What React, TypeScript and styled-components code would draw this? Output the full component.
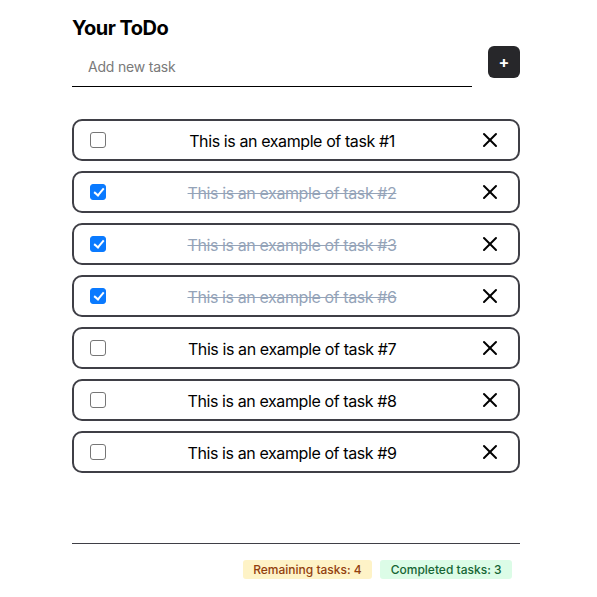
import React, { useState } from "react";
import styled, { createGlobalStyle } from "styled-components";
import { X } from "lucide-react";

const Global = createGlobalStyle`
  html, body { margin: 0; padding: 0; background: #ffffff; }
  body { font-family: Inter, "Noto Sans", Arial, sans-serif; color: #000; }
  * { box-sizing: border-box; }
`;

const Page = styled.div`
  width: 597px;
  height: 597px;
  padding: 14px 0 0 72px;
`;

const Container = styled.div`
  width: 448px;
  display: flex;
  flex-direction: column;
`;

const Title = styled.h1`
  margin: 0;
  font-size: 20px;
  line-height: 28px;
  font-weight: 700;
  letter-spacing: -0.5px;
`;

const Form = styled.div`
  display: flex;
  align-items: center;
  gap: 16px;
  margin-top: 5px;
`;

const Input = styled.input`
  width: 400px;
  height: 40px;
  border: none;
  border-bottom: 1px solid #000;
  padding: 0 16px;
  font-family: inherit;
  font-size: 14px;
  letter-spacing: -0.2px;
  outline: none;
  background: transparent;
  &::placeholder { color: #7a7a7a; }
`;

const AddButton = styled.button`
  width: 32px;
  height: 32px;
  border: none;
  border-radius: 6px;
  background: #27272a;
  color: #fff;
  display: flex;
  align-items: center;
  justify-content: center;
  padding: 0;
  margin-top: -10px;
  font-family: inherit;
  font-size: 16px;
  font-weight: 700;
  cursor: pointer;
`;

const List = styled.ul`
  list-style: none;
  margin: 32px 0 0;
  padding: 0;
  display: flex;
  flex-direction: column;
  gap: 10px;
`;

const Row = styled.li`
  height: 42px;
  border: 2px solid #3f3f46;
  border-radius: 10px;
  display: flex;
  align-items: center;
  padding: 0 16px;
  gap: 8px;
`;

const Check = styled.input`
  appearance: none;
  -webkit-appearance: none;
  width: 16px;
  height: 16px;
  margin: 0;
  border: 1px solid #767676;
  border-radius: 3px;
  background: #fff;
  flex: none;
  position: relative;
  &:checked {
    background: #0a7aff;
    border-color: #0a7aff;
  }
  &:checked::after {
    content: "";
    position: absolute;
    left: 4.5px;
    top: 1px;
    width: 4px;
    height: 8px;
    border: solid #fff;
    border-width: 0 2.5px 2.5px 0;
    transform: rotate(40deg);
  }
`;

const TaskText = styled.span<{ $done: boolean }>`
  flex: 1;
  text-align: center;
  font-size: 16px;
  line-height: 20px;
  padding-top: 2px;
  letter-spacing: -0.4px;
  color: ${(p) => (p.$done ? "#94a3b8" : "#000")};
  text-decoration: ${(p) => (p.$done ? "line-through" : "none")};
`;

const DeleteButton = styled.button`
  width: 24px;
  height: 24px;
  padding: 0;
  border: none;
  background: none;
  color: #000;
  display: flex;
  align-items: center;
  justify-content: center;
  flex: none;
  cursor: pointer;
`;

const Footer = styled.div`
  margin-top: 70px;
  border-top: 1px solid #3f3f46;
  padding: 16px 8px 0 0;
  display: flex;
  justify-content: flex-end;
  gap: 8px;
`;

const Badge = styled.span<{ $tone: "amber" | "green" }>`
  font-size: 12px;
  line-height: 19px;
  padding: 0 10.5px;
  border-radius: 3px;
  font-weight: 500;
  background: ${(p) => (p.$tone === "amber" ? "#fef3c7" : "#dcfce7")};
  color: ${(p) => (p.$tone === "amber" ? "#92400e" : "#166534")};
`;

const initial = [
  { id: 1, done: false },
  { id: 2, done: true },
  { id: 3, done: true },
  { id: 6, done: true },
  { id: 7, done: false },
  { id: 8, done: false },
  { id: 9, done: false },
];

export default function App() {
  const [tasks, setTasks] = useState(initial);
  const remaining = tasks.filter((t) => !t.done).length;
  const completed = tasks.length - remaining;
  return (
    <>
      <Global />
      <Page>
        <Container>
          <Title>Your ToDo</Title>
          <Form>
            <Input placeholder="Add new task" />
            <AddButton>+</AddButton>
          </Form>
          <List>
            {tasks.map((t) => (
              <Row key={t.id}>
                <Check
                  type="checkbox"
                  checked={t.done}
                  onChange={() =>
                    setTasks((ts) => ts.map((x) => (x.id === t.id ? { ...x, done: !x.done } : x)))
                  }
                />
                <TaskText $done={t.done}>This is an example of task #{t.id}</TaskText>
                <DeleteButton aria-label="delete">
                  <X size={24} strokeWidth={2} />
                </DeleteButton>
              </Row>
            ))}
          </List>
          <Footer>
            <Badge $tone="amber">Remaining tasks: {remaining}</Badge>
            <Badge $tone="green">Completed tasks: {completed}</Badge>
          </Footer>
        </Container>
      </Page>
    </>
  );
}
